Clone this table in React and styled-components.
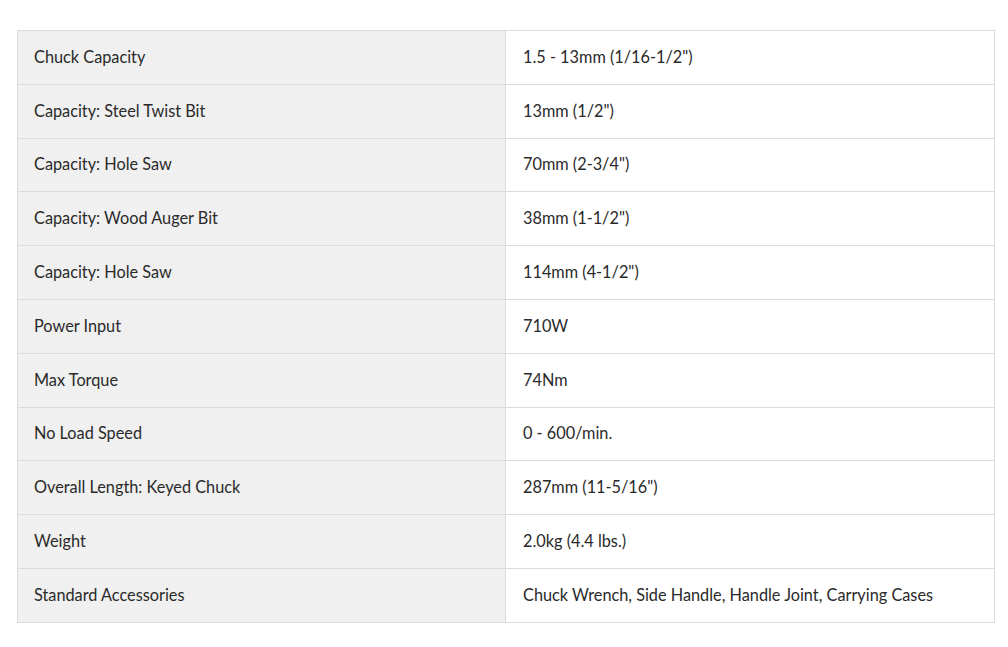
import React from "react"
import styled, { createGlobalStyle } from "styled-components"

const specs = [
  ["Chuck Capacity", "1.5 - 13mm (1/16-1/2\")"],
  ["Capacity: Steel Twist Bit", "13mm (1/2\")"],
  ["Capacity: Hole Saw", "70mm (2-3/4\")"],
  ["Capacity: Wood Auger Bit", "38mm (1-1/2\")", true],
  ["Capacity: Hole Saw", "114mm (4-1/2\")"],
  ["Power Input", "710W"],
  ["Max Torque", "74Nm"],
  ["No Load Speed", "0 - 600/min."],
  ["Overall Length: Keyed Chuck", "287mm (11-5/16\")", true],
  ["Weight", "2.0kg (4.4 lbs.)"],
  ["Standard Accessories", "Chuck Wrench, Side Handle, Handle Joint, Carrying Cases"],
]

export default function App() {
  return (
    <Page>
      <GlobalStyle />
      <SpecTable>
        <tbody>
          {specs.map(([label, value, strong], i) => (
            <Row key={i} $strong={strong}>
              <Label>{label}</Label>
              <Value>{value}</Value>
            </Row>
          ))}
        </tbody>
      </SpecTable>
    </Page>
  )
}

const GlobalStyle = createGlobalStyle`
  body {
    margin: 0;
    background: #fff;
    font-family: Lato, "Open Sans", sans-serif;
  }
`

const Page = styled.div`
  padding: 30px 13px 24px 17px;
`

const SpecTable = styled.table`
  width: 978px;
  border-collapse: collapse;
  font-size: 16.3px;
  color: #2a2a2a;
`

const Row = styled.tr`
  height: 53.8px;
  border-top: 1px solid ${p => (p.$strong ? "#cbcbcb" : "#dcdcdc")};
`

const Label = styled.td`
  width: 488px;
  box-sizing: border-box;
  padding: 0 16px 2px;
  background: #f0f0f0;
  border: 1px solid #dcdcdc;
  border-top: inherit;
  vertical-align: middle;
`

const Value = styled.td`
  padding: 0 17px 2px;
  background: #fff;
  border: 1px solid #dcdcdc;
  border-top: inherit;
  vertical-align: middle;
`
